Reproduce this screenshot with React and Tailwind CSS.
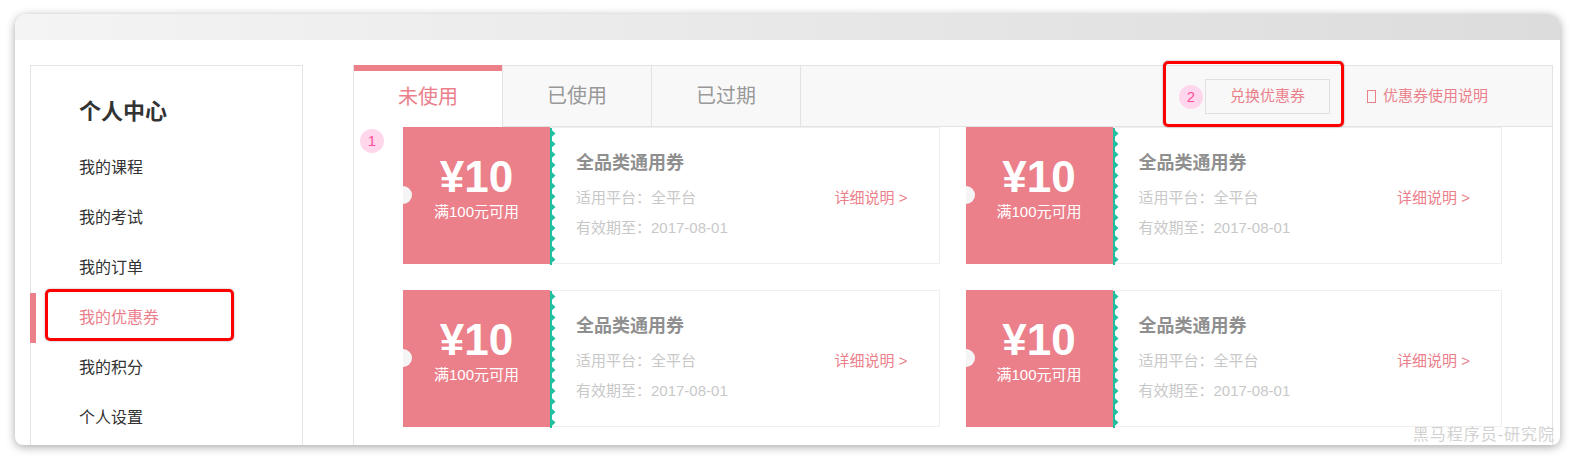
const MENU = ['我的课程', '我的考试', '我的订单', '我的优惠券', '我的积分', '个人设置']
const TABS = ['未使用', '已使用', '已过期']
const COUPONS = [1, 2, 3, 4]

function Zigzag() {
  const teeth = Array.from({ length: 13 }, (_, i) => i * 10.5 + 0.5)
  return (
    <svg width="6" height="137" viewBox="0 0 6 137" className="shrink-0">
      <rect x="0" y="0" width="2" height="137" fill="#1fbf9f" />
      {teeth.map(y => (
        <polygon key={y} points={`0,${y} 5.5,${y + 5} 0,${y + 10}`} fill="#1fbf9f" />
      ))}
    </svg>
  )
}

function Coupon() {
  return (
    <div className="flex h-[137px]">
      {/* price block */}
      <div className="relative w-[147px] shrink-0 overflow-hidden bg-[#eb808b] pt-[28px] text-center text-white">
        <span className="absolute left-[-9px] top-[59px] h-[18px] w-[18px] rounded-full bg-[#f5f5f5]" />
        <div className="text-[44px] font-bold leading-[44px]">¥10</div>
        <div className="mt-[3px] text-[15px] leading-[20px]">满100元可用</div>
      </div>
      <div className="flex flex-1 border-y border-r border-[#efefef]">
        <Zigzag />
        <div className="flex-1 pl-[20px] pr-[31px] pt-[23px]">
          <div className="text-[18px] font-bold leading-[24px] text-[#8f8f8f]">全品类通用券</div>
          <div className="mt-[13px] flex items-center justify-between text-[15px] leading-[20px]">
            <span className="text-[#c8c8c8]">适用平台：全平台</span>
            <span className="text-[#eb808b]">详细说明 &gt;</span>
          </div>
          <div className="mt-[10px] text-[15px] leading-[20px] text-[#c8c8c8]">有效期至：2017-08-01</div>
        </div>
      </div>
    </div>
  )
}

export default function App() {
  return (
    <div className="h-[462px] w-[1575px] bg-white pl-[15px] pt-[14px]"
      style={{ fontFamily: '"Liberation Sans", "Noto Sans CJK SC", sans-serif' }}>
      <div className="relative h-[431px] w-[1545px] overflow-hidden rounded-t-[12px] rounded-b-[8px] bg-white shadow-[0_2px_10px_rgba(0,0,0,0.35)]">
        {/* window title bar */}
        <div className="h-[26px] bg-gradient-to-r from-[#f4f4f4] to-[#dcdcdc]" />

        <div className="flex pl-[15px] pt-[25px]">
          {/* sidebar */}
          <aside className="h-[420px] w-[273px] shrink-0 border border-[#e3e3e3]">
            <h2 className="pl-[48px] pt-[31px] text-[22px] font-bold leading-[30px] text-[#333]">个人中心</h2>
            <ul className="mt-[16px]">
              {MENU.map(item => {
                const active = item === '我的优惠券'
                return (
                  <li key={item} className="relative flex h-[50px] items-center pl-[48px] text-[16px]">
                    {active && <span className="absolute left-[-1px] top-0 h-[50px] w-[6px] bg-[#eb808b]" />}
                    <span className={active ? 'text-[#eb808b]' : 'text-[#333]'}>{item}</span>
                  </li>
                )
              })}
            </ul>
          </aside>

          {/* content */}
          <section className="ml-[50px] h-[420px] w-[1200px] border-x border-[#e3e3e3]">
            <div className="flex h-[62px] border-y border-[#e3e3e3] bg-[#f8f8f8]">
              {TABS.map((t, i) => (
                <div key={t}
                  className={i === 0
                    ? 'relative -mt-px -mb-px flex w-[148px] items-center justify-center border-t-[6px] border-[#eb808b] bg-white text-[20px] text-[#eb808b]'
                    : 'flex w-[149px] items-center justify-center border-l border-[#e3e3e3] text-[20px] text-[#999]'}>
                  <span className={i === 0 ? '-mt-[4px]' : ''}>{t}</span>
                </div>
              ))}
              <div className="border-l border-[#e3e3e3]" />
              <div className="ml-auto flex items-center pr-[64px]">
                <button className="h-[35px] w-[125px] border border-[#e0e0e0] bg-[#f8f8f8] text-[15px] text-[#eb808b]">
                  兑换优惠券
                </button>
                <span className="ml-[37px] mr-[7px] inline-block h-[13px] w-[9px] border border-[#eb808b]" />
                <span className="text-[15px] text-[#eb808b]">优惠券使用说明</span>
              </div>
            </div>

            <div className="grid grid-cols-2 gap-[26px] pl-[49px] pr-[50px]">
              {COUPONS.map(c => <Coupon key={c} />)}
            </div>
          </section>
        </div>

        {/* annotations */}
        <div className="absolute left-[30px] top-[275px] h-[52px] w-[189px] rounded-[5px] border-[3px] border-[#ff0000] shadow-[0_0_2px_rgba(0,0,0,0.4)]" />
        <div className="absolute left-[1148px] top-[47px] h-[66px] w-[181px] rounded-[5px] border-[3px] border-[#ff0000] shadow-[0_0_2px_rgba(0,0,0,0.4)]" />
        <div className="absolute left-[345px] top-[115px] flex h-[24px] w-[24px] items-center justify-center rounded-full bg-[#ffd6ec] text-[15px] text-[#ff4f9a]">1</div>
        <div className="absolute left-[1164px] top-[71px] flex h-[24px] w-[24px] items-center justify-center rounded-full bg-[#ffd6ec] text-[15px] text-[#ff4f9a]">2</div>

        <div className="absolute bottom-[1px] right-[5px] text-[16px] leading-[18px] tracking-[1px] text-[#d2d2d2]">黑马程序员-研究院</div>
      </div>
    </div>
  )
}
